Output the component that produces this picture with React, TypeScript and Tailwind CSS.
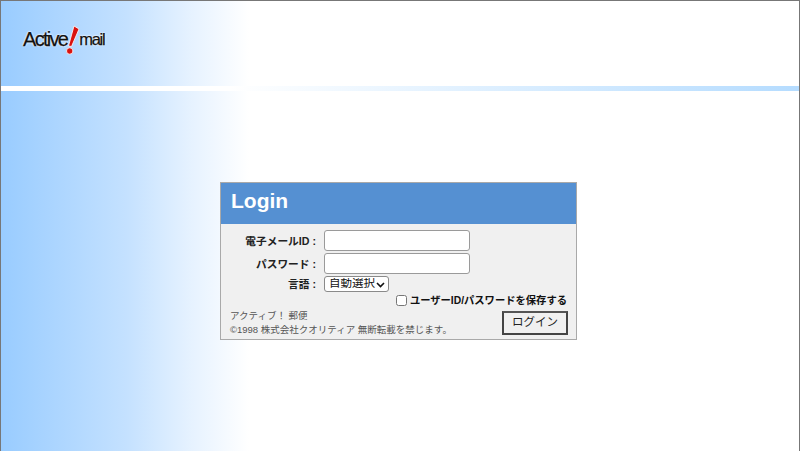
const cjk = "font-['Liberation_Sans','Noto_Sans_CJK_JP',sans-serif]";

function Logo() {
  return (
    <div className="flex items-end h-[30px] font-['Liberation_Sans',sans-serif] text-[#111] [text-shadow:0_0_2px_#fff,0_0_2px_#fff] [-webkit-text-stroke:0.25px_#111]">
      <span className="text-[20px] leading-[20px] tracking-[-1.7px] mb-[6px]">Active</span>
      <svg width="13" height="30" viewBox="0 0 13 30" className="-ml-[1px]">
        <path d="M8 1 L13 4 L5.5 21.5 L2.5 21 Z" fill="#d9120f" stroke="#fff" strokeWidth="0.8" />
        <circle cx="3.7" cy="26" r="3.2" fill="#d9120f" stroke="#fff" strokeWidth="0.8" />
      </svg>
      <span className="text-[16.5px] leading-[20px] tracking-[-1.3px] mb-[6px]">mail</span>
    </div>
  );
}

function Field({ label }: { label: string }) {
  return (
    <div className="flex items-center h-[23px]">
      <span className="w-[103px] pr-[8px] pt-[1px] text-right text-[10.7px] font-bold text-[#222]">{label}</span>
      <input
        type="text"
        className="w-[146px] h-[21px] bg-white border border-[#9a9a9a] rounded-[3px]"
      />
    </div>
  );
}

export default function App() {
  return (
    <div
      className={`h-[451px] w-[800px] overflow-hidden border-t border-x border-[#777] bg-white bg-[linear-gradient(to_right,#99ccff_0px,#c4e1ff_125px,#e6f2ff_190px,#ffffff_248px)] ${cjk}`}
    >
      <div className="h-[85px] pl-[22px] pt-[24px]">
        <Logo />
      </div>
      <div className="h-[5px] bg-[linear-gradient(to_right,#ffffff_0px,#ffffff_230px,#b5dcff_798px)]" />

      <div className="pt-[91px] pl-[219px]">
        <div className="w-[357px] h-[158px] border border-[#a9a9a9] bg-[#f0f0f0]">
          <div className="h-[41px] bg-[#5590d2] pl-[10px] pb-[7px] flex items-center">
            <h1 className="font-['Liberation_Sans',sans-serif] font-bold text-[21px] leading-none text-white">
              Login
            </h1>
          </div>
          <div className="pt-[5px]">
            <Field label="電子メールID :" />
            <Field label="パスワード :" />
            <div className="flex items-center h-[18px]">
              <span className="w-[103px] pr-[8px] pt-[1px] text-right text-[10.7px] font-bold text-[#222]">言語 :</span>
              <div className="relative w-[65px] h-[16px]">
                <select className="block appearance-none w-full h-full pl-[4px] text-[11.5px] leading-none bg-white border border-[#8a8a8a] rounded-[3px] text-[#111]">
                  <option>自動選択</option>
                </select>
                <svg width="9" height="6" viewBox="0 0 9 6" className="absolute right-[4px] top-[6px]">
                  <path d="M1 1 L4.5 4.5 L8 1" fill="none" stroke="#111" strokeWidth="1.6" />
                </svg>
              </div>
            </div>
            <div className="flex justify-end items-center h-[15px] pr-[9px] gap-[3px]">
              <input type="checkbox" className="w-[11px] h-[11px]" />
              <span className="text-[10.3px] font-bold text-[#111]">ユーザーID/パスワードを保存する</span>
            </div>
            <div className="flex justify-between pl-[9px] pr-[8px]">
              <div className="text-[9.5px] leading-[14px] text-[#555] pt-[1px]">
                <p>アクティブ！ 郵便</p>
                <p>©1998 株式会社クオリティア 無断転載を禁じます。</p>
              </div>
              <button className="w-[66px] h-[24px] mt-[3px] border-2 border-[#444] border-t-[#555] bg-[#f0f0f0] text-[11.5px] text-[#222]">
                ログイン
              </button>
            </div>
          </div>
        </div>
      </div>
    </div>
  );
}
